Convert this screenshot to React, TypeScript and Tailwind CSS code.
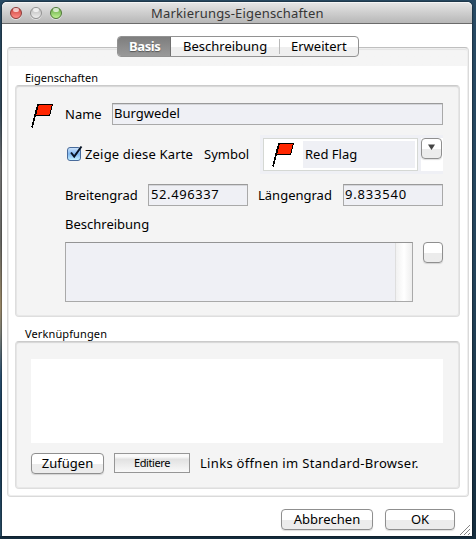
import React from "react";

type BoxProps = { className?: string; children?: React.ReactNode };

function Flag() {
  return (
    <svg width="24" height="26" viewBox="0 0 24 26" className="block shrink-0" shapeRendering="crispEdges">
      <path d="M7.5 1.5H21.5L18.5 12.5H4.5Z" fill="#ff2600" stroke="#000" strokeWidth="1" />
      <path d="M7 1L1 24.5" stroke="#000" strokeWidth="1.6" />
    </svg>
  );
}

function PushButton({ className = "", children }: BoxProps) {
  return (
    <button
      className={`flex h-[21px] shrink-0 items-center justify-center rounded-[4px] border border-[#8f8f8f] bg-linear-to-b from-white from-50% to-[#ececec] to-55% pb-[2px] whitespace-nowrap shadow-[0_1px_1px_#00000022] ${className}`}
    >
      {children}
    </button>
  );
}

function Field({ className = "", children }: BoxProps) {
  return (
    <div
      className={`h-[22px] shrink-0 border border-[#a9a9a9] border-t-[#9a9a9a] bg-[#eff0f5] leading-[19px] whitespace-nowrap shadow-[inset_0_1px_0_#d5d6da] ${className}`}
    >
      {children}
    </div>
  );
}

function Group({ className = "", children }: BoxProps) {
  return (
    <section
      className={`ml-[5px] w-[445px] rounded-[4px] border border-[#dedede] border-t-[#cbcbcb] bg-[#f4f4f4] px-[15px] shadow-[inset_0_1px_1px_#d8d8d8,inset_0_0_0_1px_#e8e8e8] ${className}`}
    >
      {children}
    </section>
  );
}

function Light({ className = "" }: BoxProps) {
  return (
    <span className={`relative size-[12px] rounded-full border shadow-[0_1px_0_#ffffff88] ${className}`}>
      <span className="absolute top-0 left-[2px] h-[4px] w-[6px] rounded-full bg-white/70" />
    </span>
  );
}

export default function App() {
  return (
    <div className="h-[539px] w-[476px] overflow-hidden bg-linear-to-b from-[#294b65] via-[#24445b] to-[#152d3e] pt-[2px] font-['Noto_Sans',sans-serif] text-[13px] leading-[18px] text-black">
      <div className="flex">
        <div className="h-[534px] w-[2px] bg-[linear-gradient(#244761,#34495a_20%,#777_31%,#6d6d69_45%,#a08d6a_57%,#80837b_62%,#2b5273_70%,#143653_80%,#294d66)]" />
        <main className="h-[534px] w-[470px] rounded-t-[5px] bg-white shadow-[0_0_2px_#000]">
          <header className="flex h-[22px] items-center rounded-t-[5px] border-b border-[#6b6b6b] bg-linear-to-b from-[#e7e7e7] to-[#b7b7b7] pl-[8px] shadow-[inset_0_1px_0_#f5f5f5]">
            <div className="flex gap-[8px]">
              <Light className="border-[#8d3b38] bg-linear-to-b from-[#c93e3a] to-[#ff8d87]" />
              <Light className="border-[#929292] bg-linear-to-b from-[#b9b9b9] to-[#eeeeee]" />
              <Light className="border-[#4f7837] bg-linear-to-b from-[#62a441] to-[#c0f493]" />
            </div>
            <h1 className="ml-[89px] text-[13px] font-normal tracking-[0.18px] whitespace-nowrap text-[#363636]">Markierungs-Eigenschaften</h1>
          </header>

          <nav className="relative z-10 mt-[12px] ml-[115px] flex h-[21px] w-[242px] overflow-hidden rounded-[4px] border border-[#929292] bg-linear-to-b from-white from-50% to-[#efefef] to-55% leading-[19px]">
            <span className="-my-px -ml-px w-[54px] border border-[#707070] bg-linear-to-b from-[#7e7e7e] to-[#999] pl-[11px] font-bold tracking-[-0.4px] text-white [text-shadow:0_1px_1px_#555]">Basis</span>
            <span className="my-[2px] w-[109px] border-r border-[#b9b9b9] pl-[12px] leading-[15px]">Beschreibung</span>
            <span className="pl-[11px]">Erweitert</span>
          </nav>

          <div className="-mt-[10px] ml-[5px] h-[450px] w-[462px] rounded-[4px] border border-[#dadada] border-t-[#bfbfbf] bg-linear-to-b from-[#f5f5f5] from-[18px] to-white to-[18px] px-[2px] pt-[21px] shadow-[inset_0_0_0_1px_#eeeeee,inset_0_2px_1px_#e4e4e4]">
            <h2 className="ml-[15px] h-[16px] text-[11px] leading-[18px]">Eigenschaften</h2>
            <Group className="h-[232px] pt-[17px]">
              <div className="flex h-[32px]">
                <Flag />
                <span className="ml-[10px] w-[47px] pt-[2px]">Name</span>
                <Field className="w-[331px] pl-px">Burgwedel</Field>
              </div>
              <div className="flex h-[49px]">
                <div className="relative mt-[12px] ml-[36px] size-[14px] rounded-[3px] border border-[#496b9b] bg-linear-to-b from-[#cae1fa] via-[#81b8f0] to-[#c5f1ff]">
                  <svg className="absolute -top-[3px] left-0" width="16" height="16" viewBox="0 0 16 16">
                    <path d="M3 7.5L6.2 11.5L13.5 1.5" fill="none" stroke="#071426" strokeWidth="2" />
                  </svg>
                </div>
                <span className="ml-[4px] w-[119px] pt-[10px] tracking-[0.17px] whitespace-nowrap">Zeige diese Karte</span>
                <span className="w-[56px] pt-[10px]">Symbol</span>
                <div className="flex h-[39px] w-[183px] bg-[#eff0f5] pt-[3px] pl-[3px]">
                  <div className="flex h-[33px] w-[155px] border border-[#d5d8d4] bg-white pt-[2px] pl-[8px]">
                    <div className="pt-[1px]">
                      <Flag />
                    </div>
                    <span className="ml-[7px] h-[27px] w-[112px] bg-[#eff0f5] pl-[2px] leading-[27px]">Red Flag</span>
                  </div>
                  <div className="ml-[3px] h-[33px] w-[22px] bg-white">
                    <PushButton className="w-[21px]">
                      <svg width="9" height="7" viewBox="0 0 9 7">
                        <path d="M1 0.5H8L4.5 6Z" fill="#444" />
                      </svg>
                    </PushButton>
                  </div>
                </div>
              </div>
              <div className="flex h-[31px]">
                <span className="ml-[34px] w-[83px] pt-[2px]">Breitengrad</span>
                <Field className="w-[100px] pl-[2px] tracking-[0.6px]">52.496337</Field>
                <span className="ml-[10px] w-[85px] pt-[2px]">Längengrad</span>
                <Field className="w-[100px] pl-px tracking-[0.8px]">9.833540</Field>
              </div>
              <div className="ml-[34px] h-[27px]">Beschreibung</div>
              <div className="ml-[34px] flex">
                <div className="flex h-[60px] w-[348px] justify-end border border-[#a9a9a9] border-t-[#949494] bg-[#eff0f5]">
                  <div className="w-[17px] border-l border-[#dedede] bg-linear-to-r from-[#f1f1f1] via-white to-[#eeeeee]" />
                </div>
                <PushButton className="ml-[10px] w-[20px]" />
              </div>
            </Group>

            <h2 className="mt-[8px] ml-[15px] h-[16px] text-[11px] leading-[18px] tracking-[0.12px]">Verknüpfungen</h2>
            <Group className="h-[148px] pt-[17px]">
              <div className="h-[84px] w-[412px] bg-white" />
              <div className="mt-[10px] flex">
                <PushButton className="w-[73px]">Zufügen</PushButton>
                <button className="ml-[10px] h-[20px] w-[76px] border border-[#969696] bg-linear-to-b from-[#f9f9f9] from-15% via-[#e2e2e2] via-30% to-[#f9f9f9] text-[11px] leading-[18px] tracking-[-0.4px]">Editiere</button>
                <span className="ml-[10px] pt-[1px] tracking-[0.31px] whitespace-nowrap">Links öffnen im Standard-Browser.</span>
              </div>
            </Group>
          </div>

          <footer className="flex pt-[12px] pl-[279px]">
            <PushButton className="w-[92px]">Abbrechen</PushButton>
            <PushButton className="ml-[12px] w-[70px]">OK</PushButton>
            <svg width="12" height="12" viewBox="0 0 12 12" className="mt-[15px] ml-[4px]">
              <path d="M1 11L11 1M5 11L11 5M9 11L11 9" stroke="#858585" strokeWidth="1" />
            </svg>
          </footer>
        </main>
      </div>
    </div>
  );
}
